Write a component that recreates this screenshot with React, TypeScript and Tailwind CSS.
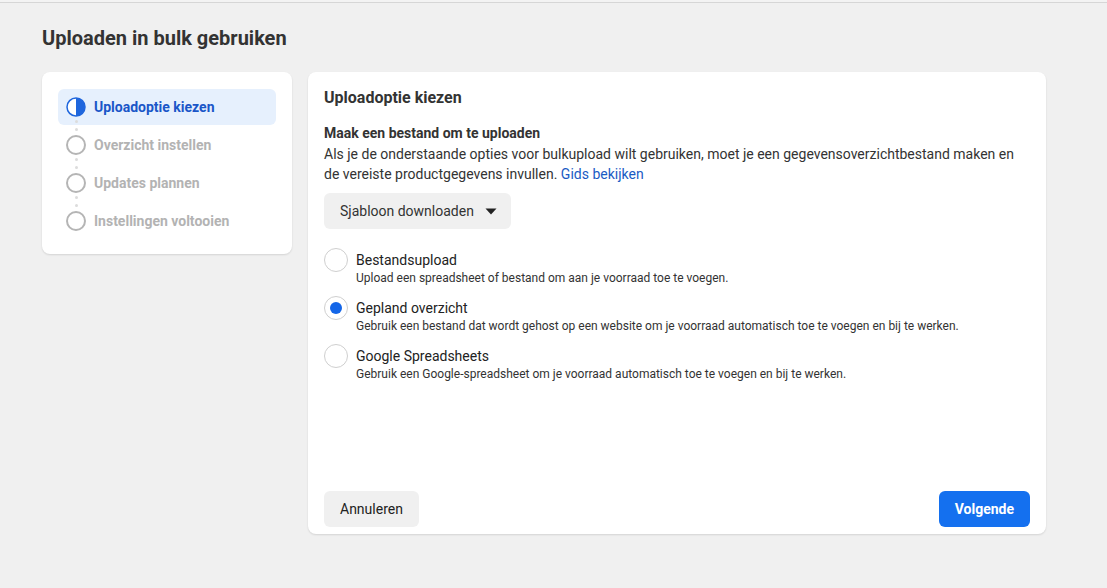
import React from 'react';

const steps = [
  { label: 'Uploadoptie kiezen', active: true },
  { label: 'Overzicht instellen', active: false },
  { label: 'Updates plannen', active: false },
  { label: 'Instellingen voltooien', active: false },
];

const options = [
  {
    title: 'Bestandsupload',
    desc: 'Upload een spreadsheet of bestand om aan je voorraad toe te voegen.',
    checked: false,
  },
  {
    title: 'Gepland overzicht',
    desc: 'Gebruik een bestand dat wordt gehost op een website om je voorraad automatisch toe te voegen en bij te werken.',
    checked: true,
  },
  {
    title: 'Google Spreadsheets',
    desc: 'Gebruik een Google-spreadsheet om je voorraad automatisch toe te voegen en bij te werken.',
    checked: false,
  },
];

const HalfCircle: React.FC = () => (
  <svg width="20" height="20" viewBox="0 0 20 20">
    <circle cx="10" cy="10" r="9" fill="#fff" stroke="#1f66dd" strokeWidth="1.5" />
    <path d="M10 1 A9 9 0 0 1 10 19 Z" fill="#1f66dd" />
  </svg>
);

export default function App() {
  return (
    <div className="min-h-screen w-full bg-[#f0f0f0] font-['Roboto',sans-serif] text-[#333]">
      <div className="h-[3px] bg-[#f3f3f3] border-b border-[#d6d6d6]" />
      <div className="pl-[42px] pt-[23px]">
        <h1 className="text-[20px] leading-6 font-bold text-[#333]">Uploaden in bulk gebruiken</h1>

        <div className="mt-[22px] flex items-start gap-4">
          {/* steps */}
          <div className="w-[250px] bg-white rounded-lg shadow-[0_1px_2px_rgba(0,0,0,0.12)] px-4 pt-[17px] pb-[15px]">
            <ul className="flex flex-col gap-[2px]">
              {steps.map((s, i) => (
                <li
                  key={s.label}
                  className={`relative h-9 flex items-center gap-2 pl-2 rounded-md ${s.active ? 'bg-[#e6f0fd]' : ''}`}
                >
                  {s.active ? (
                    <HalfCircle />
                  ) : (
                    <span className="w-5 h-5 rounded-full border-2 border-[#b5b5b5] bg-white" />
                  )}
                  <span
                    className={`text-[14px] font-bold ${s.active ? 'text-[#1a56c8]' : 'text-[#b3b3b3]'}`}
                  >
                    {s.label}
                  </span>
                  {i < steps.length - 1 && (
                    <span className="absolute left-[17px] top-[31px] flex flex-col gap-[5px]">
                      <span className="w-[3px] h-[3px] rounded-full bg-[#dcdcdc]" />
                      <span className="w-[3px] h-[3px] rounded-full bg-[#dcdcdc]" />
                    </span>
                  )}
                </li>
              ))}
            </ul>
          </div>

          {/* main card */}
          <div className="w-[738px] h-[462px] bg-white rounded-lg shadow-[0_1px_2px_rgba(0,0,0,0.12)] px-4 pt-4 pb-[7px] flex flex-col">
            <h2 className="text-[16px] leading-5 font-bold">Uploadoptie kiezen</h2>

            <div className="mt-[15px] text-[14px] leading-5">
              <div className="font-bold">Maak een bestand om te uploaden</div>
              <p className="mt-[1px]">
                Als je de onderstaande opties voor bulkupload wilt gebruiken, moet je een gegevensoverzichtbestand maken en de vereiste productgegevens invullen.{' '}
                <a className="text-[#1a5bc4]">Gids bekijken</a>
              </p>
            </div>

            <div className="mt-[9px]">
              <button className="h-9 pl-4 pr-[14px] rounded-md bg-[#f0f0f0] flex items-center gap-[11px] text-[14px] text-[#333]">
                Sjabloon downloaden
                <svg width="12" height="7" viewBox="0 0 12 7">
                  <path d="M0.5 0.5 H11.5 L6 6.5 Z" fill="#222" />
                </svg>
              </button>
            </div>

            <div className="mt-[21px] flex flex-col gap-3">
              {options.map((o) => (
                <label key={o.title} className="flex items-start gap-2">
                  <span className="mt-[-2px] w-6 h-6 rounded-full border border-[#cfcfcf] bg-white flex items-center justify-center shrink-0">
                    {o.checked && <span className="w-3 h-3 rounded-full bg-[#1466e8]" />}
                  </span>
                  <span className="flex flex-col">
                    <span className="text-[14px] leading-5 text-[#222]">{o.title}</span>
                    <span className="text-[12px] leading-4 text-[#333]">{o.desc}</span>
                  </span>
                </label>
              ))}
            </div>

            <div className="mt-auto flex justify-between">
              <button className="h-9 px-4 rounded-md bg-[#f0f0f0] text-[14px] text-[#222]">Annuleren</button>
              <button className="h-9 px-4 rounded-md bg-[#1470ef] text-[14px] font-bold text-white">Volgende</button>
            </div>
          </div>
        </div>
      </div>
    </div>
  );
}
